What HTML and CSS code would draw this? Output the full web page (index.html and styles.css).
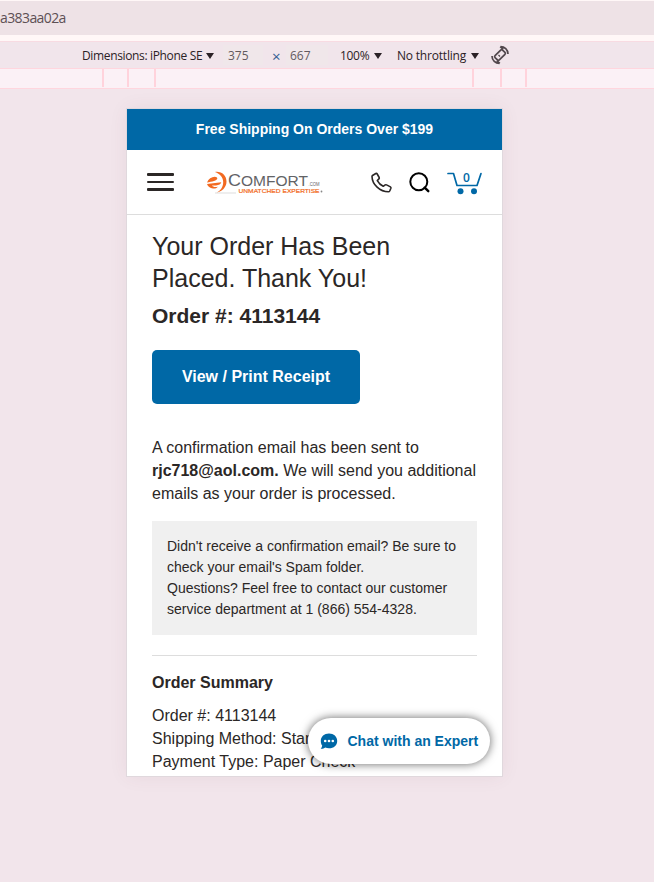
FILE: index.html
```html
<!DOCTYPE html>
<html lang="en">
<head>
<meta charset="utf-8">
<title>Order confirmation</title>
<link rel="stylesheet" href="styles.css">
</head>
<body>
<div class="address">a383aa02a</div>
<div class="gap"></div>
<div class="toolbar">
  <span class="dim">Dimensions: iPhone SE</span><i class="arrow"></i>
  <span class="field field-w">375</span>
  <span class="times">×</span>
  <span class="field field-h">667</span>
  <span class="pct">100%</span><i class="arrow"></i>
  <span class="throttle">No throttling</span><i class="arrow"></i>
  <svg class="rotate" width="20" height="20" viewBox="0 0 20 20" fill="none" stroke="#51474c" stroke-width="1.7">
    <rect x="7" y="4.7" width="6" height="10.6" rx="1.3" transform="rotate(45 10 10)"/>
    <path d="M10.5 1.6c4 0 7.500 2.900 7.500 7.400M13.200 4.400l-3-2.800M9.500 18.400c-4 0-7.500-2.900-7.500-7.400M6.800 15.600l3 2.800"/>
    <path d="M8.500 10l1.500 1.500" stroke-width="1.300"/>
  </svg>
</div>
<div class="ruler"><i></i><i></i><i></i><i></i><i></i><i></i></div>
<main class="phone">
  <div class="banner">Free Shipping On Orders Over $199</div>
  <header class="header">
    <div class="burger"><i></i><i></i><i></i></div>
    <svg class="logo" width="118" height="24" viewBox="0 0 118 24">
      <path d="M9 22h21" stroke="#ddd" stroke-width="1"/>
      <path d="M9 1C15.500 0 20.500 4.500 20.500 10.500S16 20.500 10.500 21.500c4.500-2 6.700-6 6.700-10.500S14 2.800 9 1Z" fill="#f26a21"/>
      <path d="M1 11.500C2.500 8 5.500 5.800 8.800 5.800c1.500 0 2.500.7 2.500 1.700C11.300 9.500 6 10.800 1 11.500ZM1 13L15.300 11.300C14.800 13.300 13 14.200 10 14.400L6 14.600C7 16 9 16.500 12 15.700 10.500 17.300 8.700 17.800 7 17.500 4 17 1.800 15.500 1 13Z" fill="#f26a21"/>
      <text x="22" y="15" font-size="17" fill="#626366" textLength="13" lengthAdjust="spacingAndGlyphs">C</text>
      <text x="35" y="15" font-size="14" fill="#626366" textLength="67" lengthAdjust="spacingAndGlyphs">OMFORT</text>
      <text x="102.500" y="15" font-size="5" fill="#626366" textLength="11" lengthAdjust="spacingAndGlyphs">.COM</text>
      <g fill="#f26a21" stroke="#f26a21" stroke-width=".2">
      <text x="32.500" y="21.500" font-size="6" textLength="42" lengthAdjust="spacingAndGlyphs">UNMATCHED</text>
      <text x="76.500" y="21.500" font-size="6" textLength="37" lengthAdjust="spacingAndGlyphs">EXPERTISE</text>
      </g>
      <circle cx="115.500" cy="20.500" r=".9" fill="#888"/>
    </svg>
    <svg class="call" width="22" height="22" viewBox="0 0 22 22" fill="none" stroke="#2b2726" stroke-width="1.600" stroke-linejoin="round">
      <path d="M1.500 3.500L4.800 1.500Q5.700 1.100 6.200 2L8.200 5.500Q8.500 6.300 7.900 6.900L6.300 8.600C7.600 11 9.700 13.100 12.200 14.300L14.200 12.900Q14.900 12.500 15.600 12.900L19.400 14.900Q20.200 15.400 19.900 16.200L18.700 19Q18.300 19.800 17.400 19.800C9 19.800 1.200 12.500 1 4.400Q1 3.800 1.500 3.500Z"/>
    </svg>
    <svg class="search" width="22" height="22" viewBox="0 0 22 22" fill="none" stroke="#000" stroke-width="2">
      <circle cx="9.800" cy="9.800" r="8.500"/><path d="M15.700 15.700l3.600 3.500" stroke-width="2.400" stroke-linecap="round"/>
    </svg>
    <svg class="cart" width="36" height="25" viewBox="0 0 36 25">
      <path d="M1 2.500h5.500l3.500 12h20l4-12" fill="none" stroke="#0068a6" stroke-width="1.700" stroke-linecap="round" stroke-linejoin="round"/>
      <circle cx="13.500" cy="20.300" r="3" fill="#0068a6"/><circle cx="27" cy="20.300" r="3" fill="#0068a6"/>
      <text class="count" x="16" y="10.500">0</text>
    </svg>
  </header>
  <section class="content">
    <h1>Your Order Has Been Placed. Thank You!</h1>
    <h2>Order #: 4113144</h2>
    <a class="button">View / Print Receipt</a>
    <p class="sent">A confirmation email has been sent to <b>rjc718@aol.com.</b> We will send you additional emails as your order is processed.</p>
    <div class="note">Didn't receive a confirmation email? Be sure to check your email's Spam folder.<br>Questions? Feel free to contact our customer service department at 1 (866) 554-4328.</div>
    <div class="summary">
      <h3>Order Summary</h3>
      <div>Order #: 4113144</div>
      <div>Shipping Method: Standard</div>
      <div>Payment Type: Paper Check</div>
    </div>
  </section>
  <div class="chat">
    <svg width="18" height="17" viewBox="0 0 18 17"><path d="M9 .5c4.800 0 8.200 3.200 8.200 7.400S13.800 15.300 9 15.300c-1.400 0-2.700-.3-3.700-.8-1.300 1-2.900 1.500-4.600 1.300.9-.9 1.400-2 1.500-3.200C1.300 11.300.8 9.700.8 7.900.8 3.700 4.200.5 9 .5Z" fill="#0068a6"/><g fill="#fff"><circle cx="5.200" cy="8" r="1.300"/><circle cx="9" cy="8" r="1.300"/><circle cx="12.800" cy="8" r="1.300"/></g></svg>
    <span>Chat with an Expert</span>
  </div>
</main>
</body>
</html>
```
FILE: styles.css
```css
* { box-sizing: border-box; }
body {
  margin: 0;
  height: 882px;
  overflow: hidden;
  background: #f2e5eb;
  color: #2b2726;
  font-family: "Liberation Sans", Arial, sans-serif;
}
.address {
  height: 35px;
  border-top: 1px solid #fff7f7;
  background: #eee2e6;
  color: #5d5054;
  font: 14px/34px "Open Sans", sans-serif;
  letter-spacing: -0.6px;
}
.gap { height: 6px; background: #fff7f7; }
.toolbar {
  display: flex;
  align-items: center;
  height: 28px;
  border-top: 1px solid #f8dbe2;
  border-bottom: 1px solid #ffd6de;
  background: #f1e5eb;
  padding-left: 82px;
  font: 12px/28px "Open Sans", sans-serif;
  color: #2b2226;
  white-space: nowrap;
}
.toolbar span { padding-top: 2px; }
.dim { width: 120px; letter-spacing: -0.35px; }
.arrow {
  margin: 2px 0 0 4px;
  border: 4px solid transparent;
  border-top: 6px solid #2b2226;
  border-bottom: 0;
}
.field {
  height: 20px;
  line-height: 18px;
  background: #f0e7ea;
  color: #625a5e;
}
.field-w { width: 40px; margin-left: 9px; padding-left: 5px; }
.times { margin-left: 9px; width: 10px; color: #315d91; font-size: 15px; }
.field-h { width: 42px; margin-left: 4px; padding-left: 4px; }
.pct { width: 30px; margin-left: 12px; letter-spacing: -0.3px; }
.throttle { width: 70px; margin-left: 15px; letter-spacing: -0.2px; }
.rotate { margin-left: 11px; }
.ruler {
  display: grid;
  grid-template-columns: 25px 27px 318px 28px 25px 2px;
  height: 20px;
  padding-left: 102px;
  border-bottom: 1px solid #ffd6de;
  background: #fbf1f6;
}
.ruler i { width: 2px; height: 18px; background: #ffd3dc; }
.phone {
  position: relative;
  width: 375px;
  height: 667px;
  margin: 20px 0 0 127px;
  overflow: hidden;
  background: #fff;
  outline: 1px solid #e0d8dd;
  box-shadow: 0 0 18px rgba(100, 60, 80, 0.08);
}
.banner {
  height: 41px;
  background: #0068a6;
  color: #fff;
  font-size: 14px;
  font-weight: bold;
  line-height: 41px;
  text-align: center;
}
.header {
  display: flex;
  align-items: flex-start;
  height: 65px;
  border-bottom: 1px solid #ddd;
  padding: 21px 20px 0;
}
.burger { display: flex; flex-direction: column; gap: 5px; width: 27px; padding-top: 2px; }
.burger i { height: 2.7px; border-radius: 1px; background: #2b2726; }
.logo { margin-left: 32px; font-family: "Liberation Sans", sans-serif; }
.call { margin: 1px 0 0 47px; }
.search { margin: 1px 0 0 16px; }
.cart { margin: 0 -8px 0 16px; flex: none; overflow: visible; }
.count { font: 600 12px "Open Sans", sans-serif; fill: #0068a6; }
.content { padding: 15px 25px 0; }
h1 { margin: 0; font-size: 25px; font-weight: normal; line-height: 32px; }
h2 { margin: 6px 0 19px; font-size: 21px; line-height: 31px; }
.button {
  display: block;
  width: 208px;
  height: 54px;
  border-radius: 5px;
  background: #0068a6;
  color: #fff;
  font-size: 16px;
  font-weight: bold;
  line-height: 54px;
  text-align: center;
}
.sent { margin: 32px 0 16px; font-size: 16px; line-height: 23px; }
.note {
  height: 114px;
  padding: 15px;
  background: #f0f0f0;
  font-size: 14px;
  line-height: 21px;
}
.summary { margin-top: 20px; border-top: 1px solid #ddd; padding-top: 15px; font-size: 16px; line-height: 23px; }
h3 { margin: 0 0 10px; font-size: 16px; line-height: 23px; }
.chat {
  position: absolute;
  top: 609px;
  right: 12px;
  display: flex;
  align-items: center;
  gap: 9.5px;
  width: 182px;
  height: 46px;
  padding-left: 12px;
  border-radius: 23px;
  background: #fff;
  box-shadow: 0 0 10px rgba(0, 0, 0, 0.6);
  color: #0068a6;
  font-size: 14px;
  font-weight: bold;
  white-space: nowrap;
}
.chat svg { flex: none; }
```
